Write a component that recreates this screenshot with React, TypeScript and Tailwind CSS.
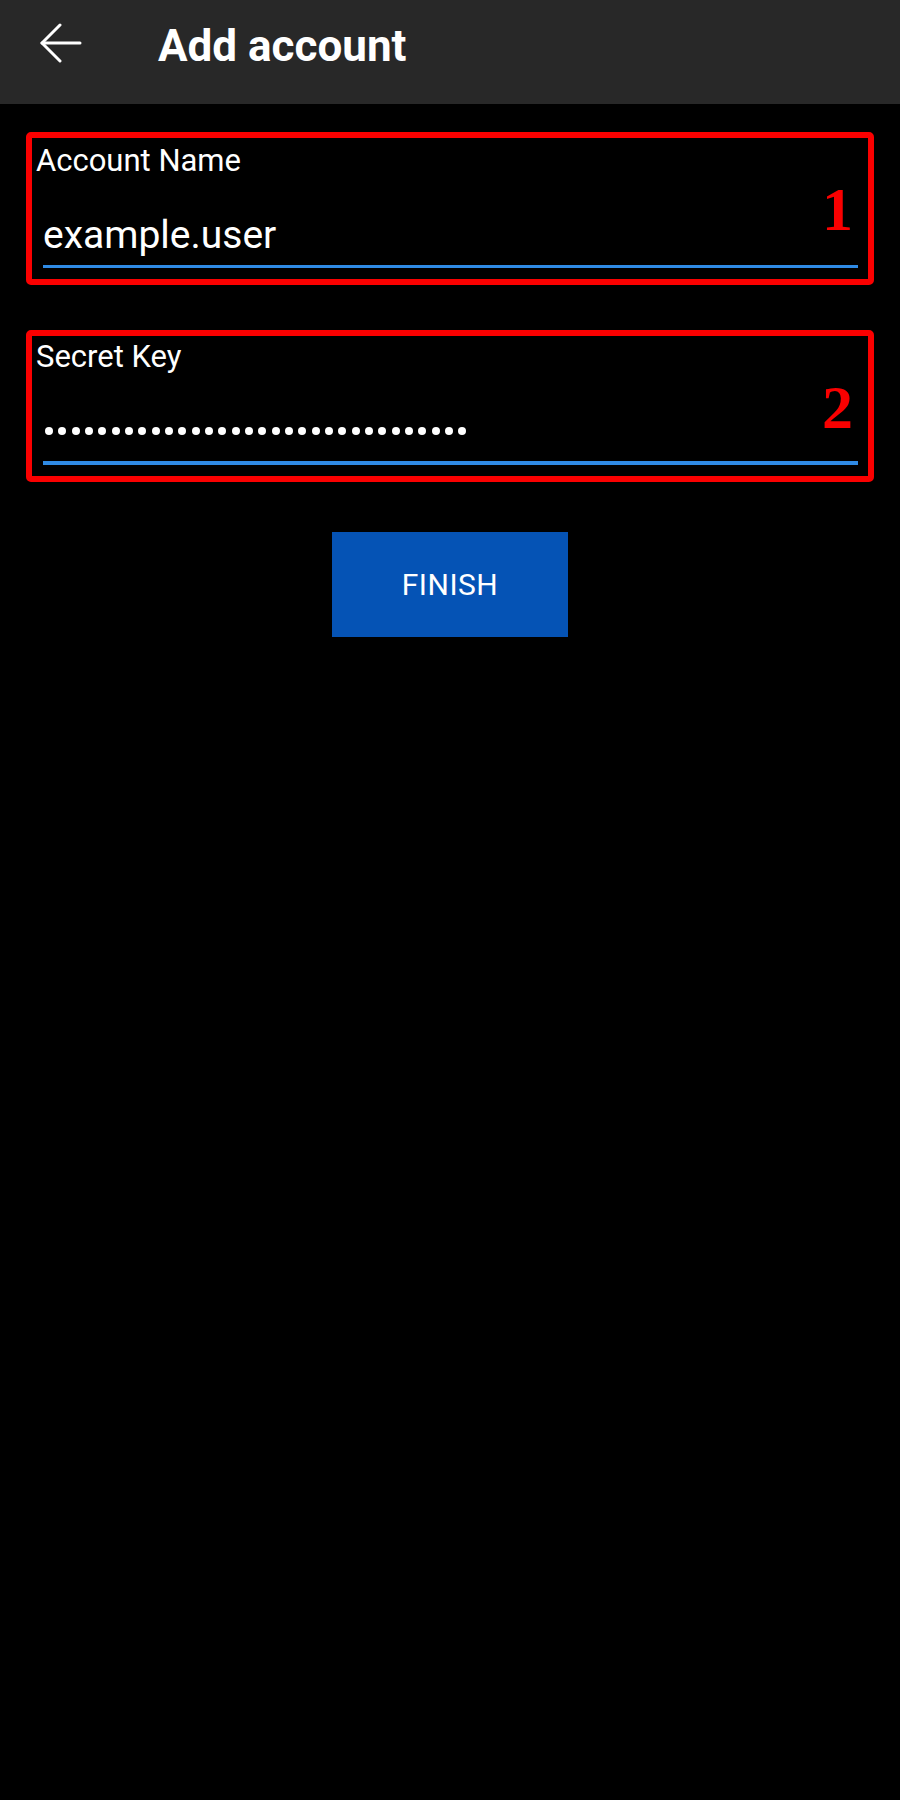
import React from "react";

const font = { fontFamily: "Roboto, 'Noto Sans', sans-serif" };

const BackArrow = () => (
  <svg width="42" height="40" viewBox="0 0 42 40" fill="none" stroke="white" strokeWidth="3" strokeLinecap="round" strokeLinejoin="round">
    <path d="M2 20 H40" />
    <path d="M20 2 L2 20 L20 38" />
  </svg>
);

const Field = ({
  label,
  mark,
  padTop,
  line,
  children,
}: {
  label: string;
  mark: string;
  padTop: string;
  line: string;
  children: React.ReactNode;
}) => (
  <div className={`relative border-[6px] border-[#fa0000] rounded-[5px] ${padTop} pb-[11px]`}>
    <div className="pl-[4px] text-[31px] leading-[36px] text-white">{label}</div>
    <div className="mt-[34px] pl-[11px] h-[44px] flex items-center">{children}</div>
    <div className={`mt-[8px] ml-[11px] mr-[10px] bg-[#2f8ae4] ${line}`} />
    <span
      className="absolute right-[15px] top-[40px] text-[62px] leading-none font-bold text-[#fa0000]"
      style={{ fontFamily: "'Liberation Serif', 'DejaVu Serif', serif" }}
    >
      {mark}
    </span>
  </div>
);

export default function App() {
  const dots = Array.from({ length: 32 });
  return (
    <div className="min-h-[1800px] bg-black" style={font}>
      {/* Top bar */}
      <header className="h-[104px] bg-[#282828] flex items-center pl-[40px] pb-[12px]">
        <div className="-mt-[6px]">
          <BackArrow />
        </div>
        <h1 className="ml-[76px] text-[44px] leading-[50px] font-bold text-white">Add account</h1>
      </header>

      <main className="px-[26px] pt-[28px] flex flex-col">
        <Field label="Account Name" mark="1" padTop="pt-[5px]" line="h-[3px]">
          <span className="text-[39px] leading-[44px] text-white">example.user</span>
        </Field>

        <div className="mt-[45px]">
          <Field label="Secret Key" mark="2" padTop="pt-[3px]" line="h-[4px]">
            <div className="flex items-center gap-[5.33px] pl-[2px]">
              {dots.map((_, i) => (
                <span key={i} className="w-[8px] h-[8px] rounded-full bg-white" />
              ))}
            </div>
          </Field>
        </div>

        <div className="mt-[50px] flex justify-center">
          <button className="w-[236px] h-[105px] bg-[#0553b5] text-white text-[30px] tracking-[0.5px]">
            FINISH
          </button>
        </div>
      </main>
    </div>
  );
}
